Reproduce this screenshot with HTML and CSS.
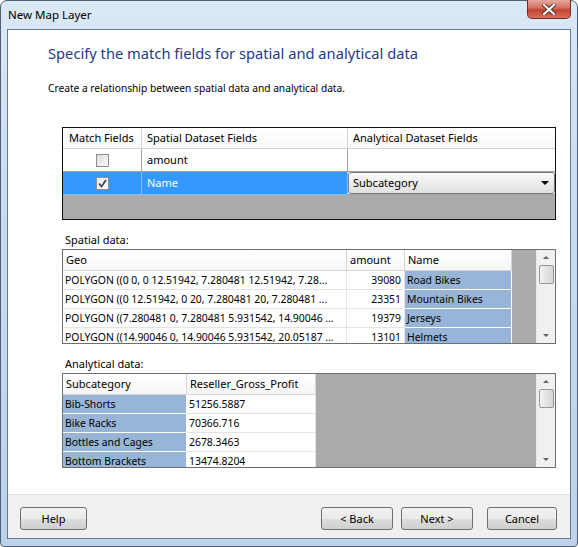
FILE: index.html
```html
<!DOCTYPE html>
<html lang="en">
<head>
<meta charset="UTF-8">
<title>New Map Layer</title>
<link rel="stylesheet" href="styles.css">
</head>
<body>
<div class="window">
    <div class="titlebar">
        <span class="title">New Map Layer</span>
        <div class="close-btn">
            <svg width="14" height="11" viewBox="0 0 14 11">
                <path d="M2 1 L12 10 M12 1 L2 10" stroke="#4a2a26" stroke-width="4" stroke-linecap="square"/>
                <path d="M2 1 L12 10 M12 1 L2 10" stroke="#fff" stroke-width="2.2" stroke-linecap="square"/>
            </svg>
        </div>
    </div>
    <div class="client">
        <div class="page">
            <h1>Specify the match fields for spatial and analytical data</h1>
            <p class="intro">Create a relationship between spatial data and analytical data.</p>

            <div class="grid match-grid">
                <div class="row head">
                    <span class="cell c-match">Match Fields</span>
                    <span class="cell c-spatial">Spatial Dataset Fields</span>
                    <span class="cell c-analytical">Analytical Dataset Fields</span>
                </div>
                <div class="row">
                    <span class="cell c-match"><span class="checkbox"></span></span>
                    <span class="cell c-spatial">amount</span>
                    <span class="cell c-analytical"></span>
                </div>
                <div class="row selected">
                    <span class="cell c-match"><span class="checkbox checked">
                        <svg width="9" height="9" viewBox="0 0 9 9"><path d="M1 4.5 L3.5 7.5 L8 1" fill="none" stroke="#3c4a63" stroke-width="1.8"/></svg>
                    </span></span>
                    <span class="cell c-spatial">Name</span>
                    <span class="cell c-analytical">
                        <span class="dropdown">Subcategory<span class="arrow"></span></span>
                    </span>
                </div>
            </div>

            <div class="label">Spatial data:</div>
            <div class="grid data-grid">
                <div class="grid-body">
                    <div class="row head">
                        <span class="cell c-geo">Geo</span>
                        <span class="cell c-amount">amount</span>
                        <span class="cell c-name">Name</span>
                    </div>
                    <div class="row">
                        <span class="cell c-geo">POLYGON ((0 0, 0 12.51942, 7.280481 12.51942, 7.28...</span>
                        <span class="cell c-amount num">39080</span>
                        <span class="cell c-name key">Road Bikes</span>
                    </div>
                    <div class="row">
                        <span class="cell c-geo">POLYGON ((0 12.51942, 0 20, 7.280481 20, 7.280481 ...</span>
                        <span class="cell c-amount num">23351</span>
                        <span class="cell c-name key">Mountain Bikes</span>
                    </div>
                    <div class="row">
                        <span class="cell c-geo">POLYGON ((7.280481 0, 7.280481 5.931542, 14.90046 ...</span>
                        <span class="cell c-amount num">19379</span>
                        <span class="cell c-name key">Jerseys</span>
                    </div>
                    <div class="row">
                        <span class="cell c-geo">POLYGON ((14.90046 0, 14.90046 5.931542, 20.05187 ...</span>
                        <span class="cell c-amount num">13101</span>
                        <span class="cell c-name key">Helmets</span>
                    </div>
                </div>
                <div class="scrollbar">
                    <span class="sb-arrow up"></span>
                    <span class="sb-thumb"></span>
                    <span class="sb-track"></span>
                    <span class="sb-arrow down"></span>
                </div>
            </div>

            <div class="label">Analytical data:</div>
            <div class="grid data-grid">
                <div class="grid-body">
                    <div class="row head">
                        <span class="cell c-sub">Subcategory</span>
                        <span class="cell c-profit">Reseller_Gross_Profit</span>
                    </div>
                    <div class="row">
                        <span class="cell c-sub key">Bib-Shorts</span>
                        <span class="cell c-profit">51256.5887</span>
                    </div>
                    <div class="row">
                        <span class="cell c-sub key">Bike Racks</span>
                        <span class="cell c-profit">70366.716</span>
                    </div>
                    <div class="row">
                        <span class="cell c-sub key">Bottles and Cages</span>
                        <span class="cell c-profit">2678.3463</span>
                    </div>
                    <div class="row">
                        <span class="cell c-sub key">Bottom Brackets</span>
                        <span class="cell c-profit">13474.8204</span>
                    </div>
                </div>
                <div class="scrollbar">
                    <span class="sb-arrow up"></span>
                    <span class="sb-thumb"></span>
                    <span class="sb-track"></span>
                    <span class="sb-arrow down"></span>
                </div>
            </div>
        </div>
        <div class="footer">
            <button class="btn btn-help">Help</button>
            <div class="nav-buttons">
                <button class="btn">&lt; Back</button>
                <button class="btn">Next &gt;</button>
                <button class="btn btn-cancel">Cancel</button>
            </div>
        </div>
    </div>
</div>
</body>
</html>
```

FILE: styles.css
```css
body {
    margin: 0;
    padding: 0;
    font-family: "Noto Sans", "Open Sans", sans-serif;
    font-size: 11px;
    color: #000;
    background-color: #fff;
}
.window {
    box-sizing: border-box;
    width: 578px;
    height: 547px;
    padding: 0 6px 7px 6px;
    border: 1px solid #4f6178;
    border-radius: 7px 7px 4px 4px;
    background: linear-gradient(#dbe8f6, #c8dbf0 40%, #bcd2eb);
    display: flex;
    flex-direction: column;
}
.titlebar {
    height: 28px;
    display: flex;
    justify-content: space-between;
    align-items: flex-start;
}
.title {
    margin-top: 6px;
    margin-left: 1px;
    font-size: 11.5px;
    color: #000;
}
.close-btn {
    box-sizing: border-box;
    width: 44px;
    height: 19px;
    margin-top: -1px;
    border: 1px solid #6b2e27;
    border-top: none;
    border-radius: 0 0 5px 5px;
    background: linear-gradient(#e9a99c, #d06e5f 45%, #c1412f 55%, #d7715d);
    display: flex;
    align-items: center;
    justify-content: center;
}
.client {
    flex: 1;
    border: 1px solid #647892;
    background-color: #f0f0f0;
    display: flex;
    flex-direction: column;
}
.page {
    height: 464px;
    background-color: #fff;
    padding-left: 40px;
}
h1 {
    margin: 13px 0 0 0;
    font-weight: normal;
    font-size: 14.7px;
    line-height: 20px;
    color: #1e3b8a;
}
.intro {
    margin: 15px 0 0 0;
    font-size: 10.2px;
    line-height: 20px;
}
.grid {
    box-sizing: border-box;
    width: 494px;
    margin-left: 14px;
    overflow: hidden;
}
.row {
    display: flex;
}
.cell {
    box-sizing: border-box;
    flex-shrink: 0;
    white-space: nowrap;
    overflow: hidden;
}

/* match fields grid */
.match-grid {
    margin-top: 29px;
    height: 93px;
    border: 1px solid #111;
    background-color: #ababab;
}
.match-grid .cell {
    height: 23px;
    line-height: 22px;
    padding-left: 5px;
    border-right: 1px solid #a0a0a0;
    border-bottom: 1px solid #a0a0a0;
    background-color: #fff;
}
.match-grid .head .cell {
    height: 21px;
    line-height: 20px;
    border-color: #d5d5d5;
    background: linear-gradient(#fff, #f7f8fa);
}
.match-grid .c-match {
    width: 79px;
    display: flex;
    align-items: center;
    justify-content: center;
    padding-left: 0;
}
.match-grid .head .c-match {
    display: block;
    padding-left: 6px;
}
.c-spatial {
    width: 206px;
}
.c-analytical {
    flex: 1;
    border-right: none !important;
}
.match-grid .selected .c-match,
.match-grid .selected .c-spatial {
    background-color: #3399ff;
    color: #fff;
    border-color: #7fbfff;
}
.checkbox {
    box-sizing: border-box;
    width: 13px;
    height: 13px;
    border: 1px solid #8e8f8f;
    background: linear-gradient(135deg, #dcdcdc, #fbfbfb);
    display: flex;
    align-items: center;
    justify-content: center;
}
.checkbox.checked {
    background: linear-gradient(135deg, #e8e8e8, #ffffff);
}
.match-grid .selected .c-analytical {
    padding: 0;
}
.dropdown {
    box-sizing: border-box;
    display: flex;
    align-items: center;
    justify-content: space-between;
    height: 22px;
    padding: 0 5px 0 4px;
    border: 1px solid #7a7a7a;
    border-radius: 3px;
    background: linear-gradient(#fafafa, #ececec 50%, #e0e0e0);
    color: #000;
}
.arrow {
    width: 0;
    height: 0;
    border-left: 4px solid transparent;
    border-right: 4px solid transparent;
    border-top: 4px solid #000;
}

/* data grids */
.label {
    margin: 11px 0 0 17px;
    line-height: 18px;
}
.data-grid {
    height: 95px;
    border: 1px solid #6f6f6f;
    display: flex;
}
.grid-body {
    flex: 1;
    background-color: #ababab;
    overflow: hidden;
}
.data-grid .cell {
    height: 19px;
    line-height: 18px;
    padding-left: 2px;
    font-size: 10.4px;
    border-right: 1px solid #e4e4e4;
    border-bottom: 1px solid #e4e4e4;
    background-color: #fff;
}
.data-grid .head .cell {
    height: 21px;
    line-height: 20px;
    padding-left: 3px;
    font-size: 11px;
    border-color: #d5d5d5;
    background: linear-gradient(#fff, #f6f6f6);
}
.data-grid .cell.key {
    background-color: #98b4d6;
    border-color: #fff;
}
.c-geo {
    width: 284px;
}
.c-amount {
    width: 58px;
}
.data-grid .num {
    text-align: right;
    padding-right: 3px;
}
.c-name {
    width: 107px;
}
.c-sub {
    width: 124px;
}
.c-profit {
    width: 129px;
}
.scrollbar {
    width: 18px;
    border-left: 1px solid #e9e9e9;
    background-color: #f0f0f0;
    display: flex;
    flex-direction: column;
    align-items: center;
}
.sb-arrow {
    height: 15px;
    width: 100%;
    display: flex;
    align-items: center;
    justify-content: center;
}
.sb-arrow::after {
    content: "";
    width: 0;
    height: 0;
    border-left: 3px solid transparent;
    border-right: 3px solid transparent;
}
.sb-arrow.up::after {
    border-bottom: 3px solid #606060;
}
.sb-arrow.down::after {
    border-top: 3px solid #606060;
}
.sb-thumb {
    box-sizing: border-box;
    width: 15px;
    height: 19px;
    border: 1px solid #979797;
    border-radius: 2px;
    background: linear-gradient(90deg, #f3f3f3, #e2e2e2 50%, #d6d6d6);
}
.sb-track {
    flex: 1;
}

/* footer */
.footer {
    flex: 1;
    border-top: 1px solid #dfdfdf;
    display: flex;
    justify-content: space-between;
    align-items: flex-start;
    padding: 12px 13px 0 12px;
}
.nav-buttons {
    display: flex;
    gap: 8px;
}
.btn {
    box-sizing: border-box;
    width: 72px;
    height: 23px;
    font-family: "Noto Sans", "Open Sans", sans-serif;
    font-size: 11px;
    color: #000;
    border: 1px solid #707070;
    border-radius: 3px;
    background: linear-gradient(#f2f2f2, #ebebeb 50%, #dddddd 51%, #cfcfcf);
    padding: 0;
}
.btn-help {
    width: 67px;
}
.btn-cancel {
    width: 70px;
    margin-left: 6px;
}
```
